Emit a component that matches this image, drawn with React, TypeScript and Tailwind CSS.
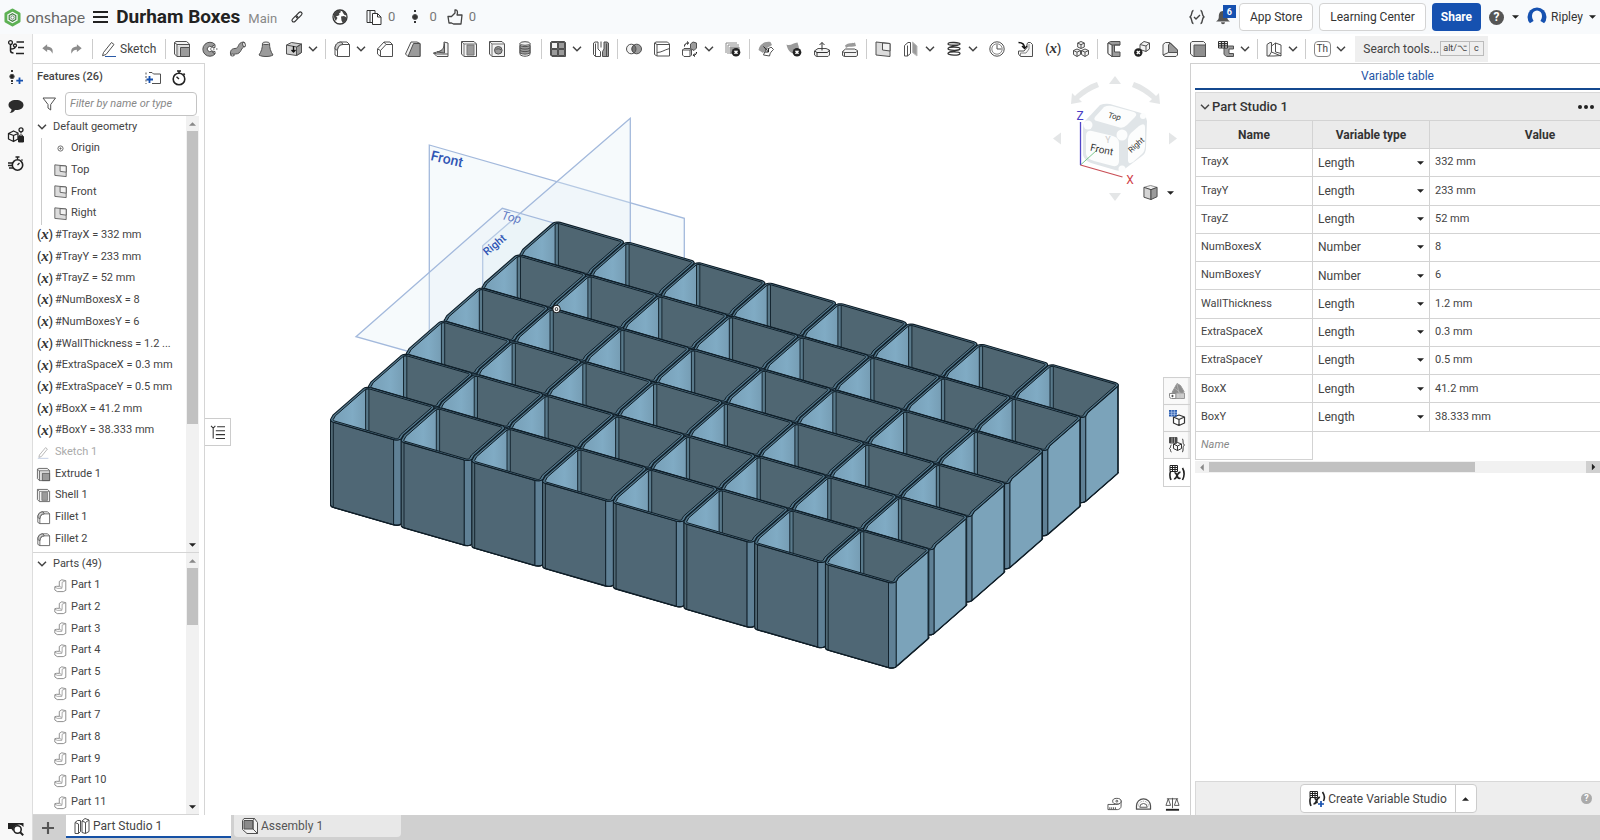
import React, { useState } from 'react';
import { clsx } from 'clsx';

const INK = '#505050';
const GREY = '#9b9b9b';
const PALE = '#f2f2f2';

type P = [number, number];

/* ---------- icons, all on a 16 x 16 grid ---------- */

const ICONS: Record<string, React.ReactNode> = {
  undo: <path d="M7 2.500 1.500 7 7 11.500V8.800c3.600 0 5 1.500 6 4.700C14.500 8.500 12 5.500 7 5.200z" fill="#8c8c8c" stroke="none" />,
  redo: <path d="M9 2.500 14.500 7 9 11.500V8.800c-3.600 0-5 1.500-6 4.700C1.500 8.500 4 5.500 9 5.200z" fill="#8c8c8c" stroke="none" />,
  pencil: (
    <>
      <path d="M2.500 11.500 10.500 1.500l2.500 2-8 10-3.500 1.200z" />
      <path d="M4 15.500h11" stroke="#2a5aa8" />
    </>
  ),
  pencilDim: (
    <>
      <path d="M3 11 10.500 2l2.300 1.800L5.300 13l-3 1z" stroke="#a9a9a9" />
      <path d="M1 15.200h13" stroke="#b9c6df" />
    </>
  ),
  extrude: (
    <>
      <path d="M.500 1.500 2 .500h10.500l3 2.500v12.500H3L.500 13z" fill={PALE} />
      <path d="M.500 1.500 3 3.500V15.500M3 3.500h12.500" />
      <path d="M6.500 6.500h9v9h-9z" fill={GREY} />
      <path d="M4.800 15V5H15" stroke="#ccc" />
    </>
  ),
  revolve: (
    <>
      <path d="M13 3.500A7 7 0 1 0 13 13l-3.500-3A2.600 2.600 0 1 1 9.500 6z" fill={GREY} />
      <path d="M9.500 6 13 3.500v3zM9.500 10l3.500 3v-2.500z" fill={PALE} />
      <path d="M8 8h1.500M11 8h1.500M14 8h1.500" />
    </>
  ),
  sweep: (
    <>
      <path d="M1 14.500c-1.500-3.500 0-7 4-7 4.500 0 2-6 8.500-6.500l1.500 4.500c-4.500.500-3 7.500-9.500 7.500-1.500 0-1.500 0-1.500 1.500z" fill={GREY} />
      <ellipse cx="14" cy="3.500" rx="1.300" ry="2.400" fill={PALE} transform="rotate(-15 14 3.500)" />
      <ellipse cx="2.500" cy="14" rx="1.800" ry="1" fill={PALE} />
    </>
  ),
  loft: (
    <>
      <path d="M4.500 2.500c0 4-1 8-3.500 11.500 3 2 11 2 14 0-2.500-3.500-3.500-7.500-3.500-11.500z" fill={GREY} />
      <ellipse cx="8" cy="2.300" rx="3.500" ry="1.300" fill={PALE} />
    </>
  ),
  thicken: (
    <>
      <path d="M.500 4 5.500 1.500l10 1.500v8.500L10.500 14.500l-10-1.500z" fill="#cfcfcf" />
      <path d="m10.500 6 5-3V11.500l-5 3z" fill={GREY} />
      <path d="m.500 4 10 2L15.500 3" />
      <path d="M7.500 5v6M5.500 9l2 2 2-2" stroke="#111" strokeWidth="1.400" />
    </>
  ),
  fillet: (
    <>
      <path d="M1 14V7.500c0-4 2.500-6.500 6.500-6.500H13l2.500 2.500v12h-12z" fill="#fff" />
      <path d="M3.500 15.500V9.500c0-3.500 2-6 5.500-6h6.500" />
      <path d="M1 8c0-4.500 2.500-7 6.500-7L9 3.500c-3.500 0-5.500 2.500-5.500 6z" fill="#d0d0d0" />
    </>
  ),
  chamfer: (
    <>
      <path d="M.500 8 7 1h6l2.500 2.500v12H3.500L.500 13z" fill="#fff" />
      <path d="M.500 8 3.500 9.500 9 3.500 7 1M9 3.500h6.500M3.500 9.500v6" />
    </>
  ),
  draft: (
    <>
      <path d="M.500 13 6 1h6l3 1.500v13H3z" fill={PALE} />
      <path d="M3 15.500 8.500 2.500H15v13z" fill={GREY} />
    </>
  ),
  rib: (
    <>
      <path d="M.500 12 11 9V1l4 1v13.500L4 15.500z" fill={PALE} />
      <path d="M4 11c4-.500 7-3 7.500-8.500V12z" fill={GREY} />
      <path d="M.500 12 4 13h11" />
    </>
  ),
  shell: (
    <>
      <path d="M.500.500h12.500l2.500 2.500v12.500H3L.500 13z" fill={PALE} />
      <path d="M.500.500 3 3v12.500M3 3h12.500" stroke="#777" />
      <path d="M6 4h7v10H6z" fill={GREY} stroke="#777" />
    </>
  ),
  hole: (
    <>
      <path d="M.500.500h12.500l2.500 2.500v12.500H3L.500 13z" fill={PALE} />
      <path d="m.500.500 2.500 2.500v12.500M3 3h12.500" stroke="#777" />
      <circle cx="9.300" cy="9.300" r="3.800" fill={GREY} />
      <path d="M6.500 9a3 2 0 0 1 5.500 0" />
    </>
  ),
  thread: (
    <>
      <path d="M3 2.500V13.500c2 2.300 8 2.300 10 0V2.500z" fill={PALE} />
      <path d="M3 4.500c2 1.500 8 1.500 10 0v7.500c-2 1.500-8 1.500-10 0z" fill={GREY} />
      <ellipse cx="8" cy="2.500" rx="5" ry="1.800" fill={PALE} />
      <path d="M3 7c2 1.500 8 1.500 10 0M3 9.500c2 1.500 8 1.500 10 0" />
    </>
  ),
  pattern: (
    <>
      <path d="M.500 1.500 1.500.500h13l1 1v14H2l-1.500-1.500z" fill="#777" />
      <path d="M1.500 1.500h6v6h-6z" fill={PALE} />
      <path d="M8.500 1.500h6v6h-6zM1.500 8.500h6v6h-6zM8.500 8.500h6v6h-6z" fill={GREY} />
    </>
  ),
  mirror: (
    <>
      <path d="M.500 2 2 1h3v7l2.500 2.500v5H2.500L.500 13.500z" fill="#fff" />
      <path d="M15.500 2v13.500h-6V10.500L11 8V1h3z" fill={GREY} />
      <path d="M2.500 2.500v13M13.500 2.500v13M8 .500v6" />
    </>
  ),
  boolean: (
    <>
      <circle cx="5.300" cy="8" r="4.800" fill={PALE} />
      <circle cx="10.700" cy="8" r="4.800" fill={GREY} />
      <path d="M8 4a5 5 0 0 1 0 8 5 5 0 0 1 0-8z" fill="#777" />
    </>
  ),
  split: (
    <>
      <path d="M.500 2 2 1h11.500l2 2v12H3L.500 13.500z" fill="#fff" />
      <path d="M.500 2 3 3.500h12.500M3 3.500V15M3 11.500c4.500 0 7-2.500 12.500-4" />
    </>
  ),
  transform: (
    <>
      <path d="M.500 9 2 7.500h6l1.500 1.500V14l-1.500 1.500H2L.500 14z" fill="#fff" />
      <path d="M.500 9h7.500v6.500M8 9l1.500-.500" />
      <path d="M8.500 3 11 1l3.500 1v5L12 9.500l-3.500-2z" fill={GREY} />
      <path d="M2.500 5.500c0-2 1-3.500 3.500-3.500M5 .500 6.700 2 5 3.500M14.500 11c0 2-1 3-3 3.500M12.800 12.500 11.300 14.200l1.700 1.300" stroke="#111" />
    </>
  ),
  deletePart: (
    <>
      <path d="M1 12V2h11M3 13V4h11M5 13V6h9v4" stroke="#8a8a8a" />
      <path d="M5 6h9v7H5z" fill={GREY} stroke="none" />
      <circle cx="11" cy="11.300" r="4.300" fill="#222" stroke="none" />
      <path d="m9.500 9.800 3 3m0-3-3 3" stroke="#fff" strokeWidth="1.500" />
    </>
  ),
  moveFace: (
    <>
      <path d="M.500 9c1-6 6-9 12-8L14 4 9 7l-4 5z" fill={GREY} stroke="none" />
      <path d="M5.500 14 8 8c2 0 4-1 5-2l2.500 2.500c-2 2-3.500 3-4 6.500z" fill="#fff" />
      <path d="m5.500 5.500 5 5.500M10.500 7.500v3.500H7" stroke="#222" />
    </>
  ),
  deleteFace: (
    <>
      <path d="M.500 3.500c4 2 7-2 11-2l1.500 5-5 6C4.500 12 1.500 9 .500 3.500z" fill={GREY} stroke="none" />
      <circle cx="11" cy="11.300" r="4.300" fill="#222" stroke="none" />
      <path d="m9.500 9.800 3 3m0-3-3 3" stroke="#fff" strokeWidth="1.500" />
    </>
  ),
  offsetFace: (
    <>
      <path d="m.500 10 3.500-2.500h8l3.500 1.500v5L14 15.500H2.500L.500 14z" fill={PALE} />
      <path d="M.500 10 3 11.500h10.500l2-2.500M3 11.500v4M8 9.500V1.500M5.500 4 8 1.500 10.500 4" stroke="#333" />
    </>
  ),
  replaceFace: (
    <>
      <path d="M3 4.500C7 1 9 3 13 1.500l1 3.500C10 6.500 6 4.500 4 7z" fill={GREY} stroke="none" />
      <path d="m.500 10.500 3-2.500h9l3 1.500v5l-1.500 1H2.500l-2-1z" fill={PALE} />
      <path d="M.500 10.500 2.500 11.500H14l1.500-1.500M2.500 11.500v4" />
    </>
  ),
  plane: (
    <>
      <path d="m1 1 14 1.500v13L1 14z" fill="#dcdcdc" />
      <path d="M7.500 2v7L15 10V2.500z" fill={PALE} />
    </>
  ),
  body: (
    <>
      <path d="M1.500 4.500 5 1.500h2.500v11L4.500 15h-3z" fill="#fff" />
      <path d="M4.500 4.500V15" />
      <path d="M9.500 1 14 5v10l-4.500-3.500z" fill={GREY} stroke="#bbb" />
    </>
  ),
  helix: (
    <path
      d="M2 3c0-2.500 12-1.500 12 0s-12 1.500-12 0M14 3c0 2-12 2-12 4.800 0-2.300 12-2.300 12 0s-12 1.700-12 0M14 7.800c0 2-12 2-12 4.800 0-2.300 12-2.300 12 0s-12 1.700-12 0"
      strokeWidth="1.300"
      stroke="#333"
    />
  ),
  circleL: (
    <>
      <circle cx="8" cy="8" r="7.200" />
      <circle cx="8" cy="8" r="5.200" fill="#fff" stroke="#888" />
      <path d="M8 3.500V8h4.500" />
    </>
  ),
  derive: (
    <>
      <path d="M11 1.500h2.500l2 2v12H3.500L1.500 13V10H7l3-3.500V3z" fill="#f7f7f7" />
      <path d="M3.500 15.500v-3.500H9l3-4V3" stroke="#888" />
      <path d="M1.500 1.500C5.500 1.500 7.500 3 7.500 7M5 5l2.500 2.500L10 5" stroke="#111" strokeWidth="1.400" />
    </>
  ),
  cubes: (
    <>
      <path d="m8 .500 3.300 1.500v4L8 7.500 4.700 6V2z" fill={PALE} />
      <path d="M4.700 2 8 3.700 11.300 2M8 3.700v3.800" />
      <path d="m4 8 3.500 1.500V13.500L4 15.500.500 13.500v-4zM12 8l3.500 1.500v4L12 15.500l-3.500-2v-4z" fill={PALE} />
      <path d="m.500 9.500 3.500 1.700 3.500-1.700M4 11.200v4.300M8.500 9.500l3.500 1.700 3.500-1.700M12 11.200v4.300" />
    </>
  ),
  sheetMetal: (
    <>
      <path d="M2 2 4.500.500H14v3.500H8.500v7H14v4.500H6L2 12.500z" fill={GREY} />
      <path d="M2 2 6 4h8M6 4v11.500" />
      <path d="M2 2 6 4v11.500L2 12.500z" fill={PALE} />
    </>
  ),
  sheetCorner: (
    <>
      <path d="m6 3.500 4-3 5.500 1.500v6L12 10.500 6 8.500z" fill={PALE} />
      <path d="m6 3.500 6 1.500L15.500 2M12 5v5.500" />
      <circle cx="4.300" cy="11.500" r="4.200" fill="#222" stroke="none" />
      <path d="m2.800 10 3 3m0-3-3 3" stroke="#fff" strokeWidth="1.400" />
    </>
  ),
  flange: (
    <>
      <path d="M1 3.500 3.500 1.500H8L15.500 9v5L14 15.500H3L1 14z" fill={PALE} />
      <path d="M6.500 4v7.500h9V9L8 2z" fill={GREY} />
      <path d="M1 14 6.500 11.500" />
    </>
  ),
  tab: (
    <>
      <path d="M.500 2 2 .500h11.500l2 2v13H3.500L.500 13z" fill={PALE} />
      <path d="M4 4h11.500v11.500H4z" fill="#8f8f8f" />
    </>
  ),
  sheetTable: (
    <>
      <path d="M6 5h9.500v3H11v4.500h4.500v3H8.500L6 13.500z" fill={GREY} />
      <path d="M.500.500h9v6.500h-9z" fill="#fff" stroke="#333" />
      <path d="M.500 2.700h9M.500 4.800h9M3.500.500v6.500M6.500.500v6.500" strokeWidth="1.300" stroke="#333" />
    </>
  ),
  bend: (
    <>
      <path d="M1 3.500 4 1.500h1.500V11L3 15H1z" fill={PALE} />
      <path d="M5.500 5 9.500 2v9l5.500 1.500V15L5.500 11z" fill="#fff" />
      <path d="M9.500 2 15 4v8.500M2.500 15H8l7-.500" />
    </>
  ),
  part: (
    <>
      <path d="M6.500 9V3L9.500 1l5 1V14l-3 1.500H4L1 13.500V9.500L3 9z" fill="#fff" stroke="#777" />
      <path d="M6.500 9 10 10.500V4l4.500-2M1 10 4 11.500h6" stroke="#999" />
    </>
  ),
  partStudio: (
    <>
      <path d="M1 4.500 3.500 2.500h3v11L4.500 15.500H1zM4.500 6v9.500M1 4.500 4.500 6" fill="#fff" />
      <path d="M8 3 11 .500l4 1.500V13.500l-3.500 2L8 14.500z" fill="#fff" />
      <path d="m8 3 3.500 1.500v11M11.500 4.500 15 2" />
    </>
  ),
  assembly: (
    <>
      <path d="M.500 2.500 2 .500h10.500l3 4v11H5l-4.500-4z" fill={PALE} />
      <path d="M2 2.500h9V11H2z" fill="#8a8a8a" />
      <path d="m12.500.500-1.500 2V11l4.500 4.500" />
    </>
  ),
  doc: (
    <>
      <path d="M1 13.500V1.500h8V4M1 13.500h5" stroke="#333" />
      <path d="M6.500 4.500h5l3.500 3.500v7.500H6.500z" fill="#fff" stroke="#333" />
      <path d="M11.500 4.500V8H15M4 1.500v12" stroke="#333" />
    </>
  ),
  version: (
    <>
      <path d="M8 1v3M8 12v3" strokeWidth="2" strokeDasharray="2 1" stroke="#333" />
      <circle cx="8" cy="8" r="2.500" fill="#333" />
    </>
  ),
  thumb: <path d="M1 7.500h3.500L8 4V1c2.500-.500 3 2 2 5h5l-1 9H6.500l-2-1H2z" strokeWidth="1.300" stroke="#444" />,
  globe: (
    <>
      <circle cx="8" cy="8" r="7" fill="#fff" strokeWidth="1.300" stroke="#333" />
      <path d="M2 5c1-2 3-3.500 6-3.500L9 3 7 4.500 7.500 6 5.500 7 4 7l1.500 2c-.500 1-1 1-1.500 3C2.500 10.500 1.500 8 2 5zM10 1.500c2 .500 4 2 5 5l-2.500-.500L11 4zM9 7.500l3-.500 2.500 1.500c0 2.500-1.500 4.500-3.500 6L9.500 11.500z" fill="#444" stroke="none" />
    </>
  ),
  link: (
    <g transform="rotate(-45 8 8)" strokeWidth="1.500" stroke="#333">
      <rect x="-.500" y="5.700" width="9.500" height="4.600" rx="2.300" />
      <rect x="7" y="5.700" width="9.500" height="4.600" rx="2.300" />
    </g>
  ),
  folderPlus: (
    <>
      <path d="M4 2.500h3L8.500 4h7v9.500H7" />
      <path d="M1 2.500v11.500" strokeDasharray="2 1.500" />
      <path d="M4.500 6v7M1.500 9.500h6.500" stroke="#1651b0" strokeWidth="1.800" />
    </>
  ),
  stopwatch: (
    <>
      <circle cx="8" cy="9" r="5.800" strokeWidth="1.600" stroke="#222" />
      <path d="M6 1h4M8 1v2M12.500 3.500l1.300 1.300M8 9 5.500 6.800" strokeWidth="1.500" stroke="#222" />
    </>
  ),
  history: (
    <>
      <circle cx="9.500" cy="9" r="5.200" strokeWidth="1.600" stroke="#222" />
      <path d="M7.500 1h4M9.500 1v2M13.500 3.500l1 1M9.500 9l2-2M0 7h5M0 9.500h4M1 12h4" strokeWidth="1.300" stroke="#222" />
    </>
  ),
  filter: <path d="M2 2h12.500L9.700 8.500V14L7 12V8.500z" />,
  tree: (
    <>
      <circle cx="2.500" cy="2.500" r="1.900" strokeWidth="1.300" stroke="#222" />
      <circle cx="7" cy="5.500" r="1.500" strokeWidth="1.300" stroke="#222" />
      <path d="M2.500 4.500v6c0 2 1 2.500 3 2.500M2.500 9c3 0 4.500-.500 4.500-2M8.500 2H16M10 7.500h6M8 13.500h8" stroke="#222" strokeWidth="1.500" />
    </>
  ),
  versionPlus: (
    <>
      <path d="M4 1v3M4 11v4" strokeWidth="1.800" strokeDasharray="2 1" stroke="#222" />
      <circle cx="4" cy="7.500" r="2.200" fill="#222" />
      <path d="M11.500 8.500v6.500M8.300 11.700H15" stroke="#1651b0" strokeWidth="1.800" />
    </>
  ),
  comment: <path d="M8 2C3.500 2 .500 4 .500 7c0 2 1.500 3.500 3 4.200C3.500 12.500 3 14 1.500 15c2.500 0 4.500-1.200 5.500-3h1c4.500 0 7.500-2 7.500-5S12.500 2 8 2z" fill="#2b2b2b" stroke="none" />,
  cubeLock: (
    <>
      <path d="m5.500 4 4.500 2v6l-4.500 2.500L.500 12V6.500zM.500 6.500l5 2 4.500-2M5.500 8.500v6" strokeWidth="1.300" stroke="#222" />
      <circle cx="13" cy="2.800" r="2" strokeWidth="1.300" stroke="#222" />
      <path d="M10.500 9.500h5V15h-5z" fill="#222" stroke="#222" />
      <path d="M13 5v1.500M11.700 9.500V8h2.600v1.500" stroke="#222" />
    </>
  ),
  searchTabs: (
    <>
      <path d="M0 3h15.500v4a5.500 5.500 0 0 0-10 4H5L3.500 9H0z" fill="#222" stroke="none" />
      <circle cx="9.500" cy="9.500" r="3.700" fill="#fff" strokeWidth="1.600" stroke="#222" />
      <path d="m12.200 12.200 3 3" strokeWidth="2" stroke="#222" />
    </>
  ),
  braces: <path d="M4.500 1.500C2 1.500 3.500 7 1 8c2.500 1 1 6.500 3.500 6.500M11.500 1.500C14 1.500 12.500 7 15 8c-2.500 1-1 6.500-3.500 6.500M5 8l2 2 4-4" strokeWidth="1.400" stroke="#444" />,
  bell: <path d="M8 2C4.500 2 3.800 5 3.800 8c0 2-.800 3-2.800 4.500h14C13 11 12.200 10 12.200 8c0-3-.700-6-4.200-6zM6 13.300a2 2 0 0 0 4 0z" fill="#555" stroke="none" />,
  swatches: (
    <>
      <path d="M3 9.500 8 .500l3.500 2L15 8.500 13 11H5z" fill="#8d8d8d" stroke="#999" />
      <path d="M.500 10.500h6.500V15.500H2.500a2 2 0 0 1-2-2z" fill="#fff" stroke="#888" />
      <path d="M7 10h8.500v5.500H7z" fill="#ccc" stroke="#999" />
      <path d="M11 10v5.500M5.500 5l6 5M8 1l2 9" stroke="#bbb" strokeWidth=".700" />
      <circle cx="3.500" cy="13" r=".700" fill="#222" />
    </>
  ),
  gridCube: (
    <>
      <path d="m10 5 5.500 2v6L10 15.500 4.500 13V7zM4.500 7l5.500 2.500L15.500 7M10 9.500v6" fill="#fff" strokeWidth="1.200" stroke="#333" />
      <path d="M0 0h8v6.500H0z" fill="#2a5caf" stroke="none" />
      <path d="M0 2.200h8M0 4.300h8M2.700 0v6.500M5.300 0v6.500" stroke="#bcd0f0" strokeWidth=".700" />
    </>
  ),
  gridBraces: (
    <>
      <path d="m8.500 5.500 4 1.500v4.500l-4 2-4-2V7zM4.500 7l4 2 4-2M8.500 9v4.500" strokeWidth="1" stroke="#333" />
      <path d="M2.500 8C1 8 2 11 .500 11.500 2 12 1 15 2.500 15M13 2c2 0 0 5 2.500 6-2.500 1-.500 7-2.500 7" stroke="#333" />
      <path d="M.500.500h7.500v5.500H.500z" fill="#444" />
      <path d="M3 .500V6M5.500.500V6" stroke="#ccc" strokeWidth=".700" />
    </>
  ),
  gridVar: (
    <>
      <path d="M2 5.500c-1.500 3-1.500 6 0 9.500M13.500 3c2 3.500 2 8 0 12" strokeWidth="1.600" stroke="#222" />
      <path d="M5 13.500c3 1.500 3-7.500 6.500-6M5.500 8c3-1 2 7 6 5" strokeWidth="1.800" stroke="#222" />
      <path d="M1 .500h7.500v6H1z" fill="#fff" stroke="#222" />
      <path d="M1 2.500h7.500M1 4.500h7.500M3.500.500v6M6 .500v6" stroke="#222" strokeWidth="1" />
    </>
  ),
  gridVarPlus: (
    <>
      <path d="M2 5.500c-1.500 3-1.500 6 0 9.500M13.500 1c2 3 2 7 1 9" strokeWidth="1.600" stroke="#222" />
      <path d="M4.500 12.500c3 1.500 3-7 6.500-6M5.500 8c2-1 2 3 3 4" strokeWidth="1.800" stroke="#222" />
      <path d="M1 .500h7.500v6H1z" fill="#fff" stroke="#222" />
      <path d="M1 2.500h7.500M1 4.500h7.500M3.500.500v6M6 .500v6" stroke="#222" strokeWidth="1" />
      <path d="M12 10v6M9 13h6" stroke="#1651b0" strokeWidth="1.700" />
    </>
  ),
  shadedCube: (
    <>
      <path d="m8 .500 7 2L8.500 5 1 2.500z" fill="#eee" stroke="#888" />
      <path d="M1 2.500 8.500 5v10.500L1 13z" fill="#d4d4d4" stroke="#444" />
      <path d="m15 2.500-6.500 2.500v10.500L15 12.500z" fill="#9a9a9a" stroke="#444" />
    </>
  ),
  listMenu: <path d="M0 1l2.500 2.500L5 1M7 2h9M5.500 6.500H16M5.500 11H16M5.500 15.500H16M2.500 4v11.500" stroke="#333" strokeWidth="1.200" />,
  tape: (
    <>
      <path d="M1 9h8c4 0 6-1 6-4v6c0 2-2 3.500-4 3.500H1z" fill="#fff" />
      <ellipse cx="10.500" cy="5.500" rx="4.500" ry="3" fill="#fff" />
      <circle cx="10.500" cy="5.500" r="1" />
      <path d="M3 14v-2M5 14v-2M7 14v-2M9 14v-2" />
    </>
  ),
  protractor: (
    <>
      <path d="M.500 14V10.500a7.500 7.500 0 0 1 15 0V14z" fill="#fff" strokeWidth="1.300" />
      <path d="M4 12a4 4 0 0 1 8 0z" />
      <path d="M2.500 11a5.500 5.500 0 0 1 11 0" stroke="#888" strokeDasharray="1 1" />
    </>
  ),
  scale: (
    <>
      <path d="M8 2v11M2 3h12M3.500 3 1 10h5zM12.500 3 10 10h5z" />
      <path d="M1 14.700h14" strokeWidth="2" stroke="#222" />
    </>
  ),
};

function Icon({ name, size = 'size-4' }: { name: string; size?: string }) {
  return (
    <svg viewBox="0 0 16 16" className={clsx('shrink-0 overflow-visible', size)} fill="none" stroke={INK} strokeWidth="1" strokeLinejoin="round" aria-hidden="true">
      {ICONS[name]}
    </svg>
  );
}

function Chevron() {
  return (
    <svg viewBox="0 0 10 6" className="h-1.5 w-2.5 shrink-0" fill="none" stroke="#444" strokeWidth="1.500" aria-hidden="true">
      <path d="m1 .800 4 4 4-4" />
    </svg>
  );
}

function Caret({ up = false }: { up?: boolean }) {
  return (
    <svg viewBox="0 0 8 4" className={clsx('h-1 w-[7px] shrink-0', up && 'rotate-180')} aria-hidden="true">
      <path d="M0 0h8L4 4z" fill="#222" />
    </svg>
  );
}

function VarMark() {
  return (
    <span className="text-xs font-medium whitespace-nowrap text-[#333]">
      (<i className="font-['Liberation_Serif',serif] text-[15px] font-bold">x</i>)
    </span>
  );
}

/* ---------- header ---------- */

function Header() {
  return (
    <header className="flex h-[34px] shrink-0 items-center bg-[#f8fafc] pl-1 text-[#333]">
      <svg viewBox="0 0 18 20" className="h-[19px] w-[17px]" fill="none" aria-hidden="true">
        <path d="m9 2 7 4v8l-7 4-7-4V6z" stroke="#5db154" strokeWidth="3" strokeLinejoin="round" />
        <path d="m9 6 3.500 2v4L9 14l-3.500-2V8z" stroke="#3d7c3b" strokeWidth="1.200" fill="#fff" />
        <circle cx="9" cy="10" r="1.800" stroke="#5b7d62" />
      </svg>
      <span className="ml-[5px] font-['Lato',sans-serif] text-[16px] text-[#666]">onshape</span>
      <button aria-label="Document menu" className="ml-2 flex w-[15px] flex-col gap-[3px]">
        <span className="h-[2px] bg-[#222]" />
        <span className="h-[2px] bg-[#222]" />
        <span className="h-[2px] bg-[#222]" />
      </button>
      <h1 className="ml-2 text-[19px] font-bold text-[#222]">Durham Boxes</h1>
      <span className="mt-1 ml-2 text-[13px] text-[#888]">Main</span>
      <button aria-label="Copy link" className="ml-3.5">
        <Icon name="link" size="size-3" />
      </button>
      <div className="ml-[29px] flex items-center text-[13px] text-[#777]">
        <Icon name="globe" />
        <Icon name="doc" size="size-4 ml-[18px]" />
        <span className="ml-1.5">0</span>
        <Icon name="version" size="size-4 ml-3" />
        <span className="ml-1.5">0</span>
        <Icon name="thumb" size="size-4 ml-2.5" />
        <span className="ml-1.5">0</span>
      </div>
      <div className="ml-auto flex items-center pr-1 text-xs">
        <button aria-label="Checks">
          <Icon name="braces" />
        </button>
        <button aria-label="Notifications" className="relative mr-2 ml-2.5">
          <Icon name="bell" />
          <span className="absolute -top-1 left-2 flex h-[13px] w-[13px] items-center justify-center bg-[#1651b0] text-[9px] font-bold text-white">6</span>
        </button>
        <button className="h-7 rounded border border-[#d3d3d3] bg-white px-2.5">App Store</button>
        <button className="ml-1.5 h-7 rounded border border-[#d3d3d3] bg-white px-2.5">Learning Center</button>
        <button className="ml-1.5 h-7 rounded bg-[#1651b0] px-[9px] font-bold text-white">Share</button>
        <button aria-label="Help" className="ml-2 flex items-center gap-2">
          <span className="flex size-[15px] items-center justify-center rounded-full bg-[#555] text-xs font-bold text-white">?</span>
          <Caret />
        </button>
        <button className="ml-2 flex items-center">
          <svg viewBox="0 0 20 20" className="size-5" aria-hidden="true">
            <circle cx="10" cy="10" r="9.500" fill="#1651b0" />
            <path d="M5 9a5 5.500 0 0 1 10 0c0 3-1.500 4-1.500 5l4 2.500L14.500 20H5.500l-3-3.500 4-2.500c0-1-1.500-2-1.500-5z" fill="#f8fafc" />
          </svg>
          <span className="mr-1.5 ml-1">Ripley</span>
          <Caret />
        </button>
      </div>
    </header>
  );
}

/* ---------- toolbar ---------- */

// '|' is a divider, 'v' the drop-down arrow that belongs to the tool before it
const TOOLS = [
  'extrude', 'revolve', 'sweep', 'loft', 'thicken', 'v', '|',
  'fillet', 'v', 'chamfer', 'draft', 'rib', 'shell', 'hole', 'thread', '|',
  'pattern', 'v', 'mirror', '|',
  'boolean', 'split', 'transform', 'v', 'deletePart', '|',
  'moveFace', 'deleteFace', 'offsetFace', 'replaceFace', '|',
  'plane', 'body', 'v', 'helix', 'v', 'circleL', 'derive', 'var', 'cubes', '|',
  'sheetMetal', 'sheetCorner', 'flange', 'tab', 'sheetTable', 'v', '|',
  'bend', 'v', '|',
  'th', 'v',
];

function Divider() {
  return <span className="mx-[2px] h-5 w-px shrink-0 bg-[#ccc]" />;
}

function Toolbar() {
  return (
    <div className="flex h-[29px] shrink-0 items-center bg-white text-xs text-[#444]">
      <button aria-label="Undo" className="flex w-[29px] justify-center">
        <Icon name="undo" size="size-[14px]" />
      </button>
      <button aria-label="Redo" className="flex w-7 justify-center">
        <Icon name="redo" size="size-[14px]" />
      </button>
      <Divider />
      <button className="mr-[7px] ml-1.5 flex items-center gap-[3px]">
        <Icon name="pencil" />
        Sketch
      </button>
      <Divider />
      {TOOLS.map((tool, i) => {
        if (tool === '|') return <Divider key={i} />;
        if (tool === 'v') {
          return (
            <button key={i} aria-label="More tools" className="flex h-7 w-[15px] shrink-0 items-center">
              <Chevron />
            </button>
          );
        }
        return (
          <button key={i} aria-label={tool} className="flex h-7 w-7 shrink-0 items-center justify-center">
            {tool === 'var' && <VarMark />}
            {tool === 'th' && <span className="rounded-sm border border-[#888] px-[2px] text-[10px] leading-[14px]">Th</span>}
            {tool !== 'var' && tool !== 'th' && <Icon name={tool} />}
          </button>
        );
      })}
      <label className="ml-1 flex h-[26px] w-[133px] shrink-0 items-center bg-[#efefef] pl-2">
        <input aria-label="Search tools" placeholder="Search tools..." className="w-[77px] bg-transparent outline-none placeholder:text-[#444]" />
        <kbd className="border border-[#bbb] px-[2px] font-[inherit] text-[9px] leading-[13px]">alt/⌥</kbd>
        <kbd className="border border-l-0 border-[#bbb] px-1 font-[inherit] text-[9px] leading-[13px]">c</kbd>
      </label>
    </div>
  );
}

/* ---------- left side ---------- */

function Rail() {
  return (
    <nav className="flex w-[33px] shrink-0 flex-col items-center border-r border-[#ddd] bg-[#f8f8f8] pt-1.5">
      <div className="flex flex-col gap-[13px]">
        {['tree', 'versionPlus', 'comment', 'cubeLock', 'history'].map(name => (
          <button key={name} aria-label={name}>
            <Icon name={name} />
          </button>
        ))}
      </div>
      <button aria-label="Search tabs" className="mt-auto mb-1">
        <Icon name="searchTabs" />
      </button>
    </nav>
  );
}

const FEATURES = [
  { icon: 'var', text: '#TrayX = 332 mm' },
  { icon: 'var', text: '#TrayY = 233 mm' },
  { icon: 'var', text: '#TrayZ = 52 mm' },
  { icon: 'var', text: '#NumBoxesX = 8' },
  { icon: 'var', text: '#NumBoxesY = 6' },
  { icon: 'var', text: '#WallThickness = 1.2 ...' },
  { icon: 'var', text: '#ExtraSpaceX = 0.3 mm' },
  { icon: 'var', text: '#ExtraSpaceY = 0.5 mm' },
  { icon: 'var', text: '#BoxX = 41.2 mm' },
  { icon: 'var', text: '#BoxY = 38.333 mm' },
  { icon: 'pencilDim', text: 'Sketch 1' },
  { icon: 'extrude', text: 'Extrude 1' },
  { icon: 'shell', text: 'Shell 1' },
  { icon: 'fillet', text: 'Fillet 1' },
  { icon: 'fillet', text: 'Fillet 2' },
];

function VScroll({ thumb }: { thumb: string }) {
  return (
    <div className="flex w-[13px] shrink-0 flex-col items-center bg-[#f1f1f1]">
      <span className="flex h-[15px] items-center opacity-50">
        <Caret up />
      </span>
      <span className={clsx('w-[11px] bg-[#c1c1c1]', thumb)} />
      <span className="mt-auto flex h-[15px] items-center">
        <Caret />
      </span>
    </div>
  );
}

function FeaturePanel() {
  return (
    <aside className="flex w-[172px] shrink-0 flex-col border-t border-r border-[#d5d5d5] bg-white pr-[5px] text-[11px] text-[#444]">
      <div className="flex h-[27px] items-center pl-1">
        <h2 className="font-medium">Features (26)</h2>
        <button aria-label="New folder" className="ml-auto">
          <Icon name="folderPlus" />
        </button>
        <button aria-label="Timing" className="mr-3 ml-2.5">
          <Icon name="stopwatch" />
        </button>
      </div>
      <div className="flex h-[25px] items-center pl-2">
        <Icon name="filter" />
        <input
          aria-label="Filter by name or type"
          placeholder="Filter by name or type"
          className="mr-[2px] ml-2 h-6 min-w-0 flex-1 rounded-sm border border-[#c4c4c4] px-1 text-[11px] italic outline-none placeholder:text-[#888]"
        />
      </div>
      <div className="flex h-[437px] shrink-0 border-b border-[#d5d5d5]">
        <ul className="grid h-[434px] min-w-0 flex-1 auto-rows-fr">
          <li className="flex items-center gap-1.5 pl-1">
            <Chevron />
            Default geometry
          </li>
          <li className="row-span-4 ml-2 grid auto-rows-fr border-l border-[#ccc] pl-3">
            <span className="flex items-center gap-1">
              <svg viewBox="0 0 14 14" className="size-[13px]" fill="none" stroke="#666" aria-hidden="true">
                <circle cx="7" cy="7" r="2.800" />
                <circle cx="7" cy="7" r=".700" fill="#666" />
              </svg>
              Origin
            </span>
            {['Top', 'Front', 'Right'].map(name => (
              <span key={name} className="flex items-center gap-1">
                <Icon name="plane" size="size-[13px]" />
                {name}
              </span>
            ))}
          </li>
          {FEATURES.map(({ icon, text }) => (
            <li key={text} className={clsx('flex items-center pl-1 whitespace-nowrap', icon === 'pencilDim' && 'text-[#aaa]')}>
              <span className="flex w-[18px] shrink-0 items-center">{icon === 'var' ? <VarMark /> : <Icon name={icon} size="size-[13px]" />}</span>
              {text}
            </li>
          ))}
        </ul>
        <VScroll thumb="h-[293px]" />
      </div>
      <div className="flex min-h-0 flex-1 border-b border-[#d5d5d5]">
        <ul className="grid h-[260px] min-w-0 flex-1 auto-rows-fr">
          <li className="flex items-center gap-1.5 pl-1">
            <Chevron />
            Parts (49)
          </li>
          {Array.from({ length: 11 }).map((_, i) => (
            <li key={i} className="flex items-center gap-1 pl-[21px]">
              <Icon name="part" size="size-[13px]" />
              Part {i + 1}
            </li>
          ))}
        </ul>
        <VScroll thumb="h-[57px]" />
      </div>
    </aside>
  );
}

/* ---------- model ---------- */

const COLS = 8;
const ROWS = 6;
const BOX_X = 41.2;
const BOX_Y = 38.333;
const HEIGHT = 87;
const SAG = 1.8;

// tray millimetres to drawing units
const project = (x: number, y: number, drop = 0): P => [555.3 + x * 1.7036 - y * 0.976, 221 + x * 0.4916 + y * 0.8516 + drop];

const line = (pts: P[]) => pts.map(([x, y]) => `${x.toFixed(1)},${y.toFixed(1)}`).join(' ');

function corner(cx: number, cy: number, r: number, from: number, drop = 0): P[] {
  return Array.from({ length: 6 }).map((_, i) => {
    const a = ((from + i * 18) * Math.PI) / 180;
    return project(cx + r * Math.cos(a), cy + r * Math.sin(a), drop);
  });
}

// clockwise from the back-left corner; sag lowers the two front corners of the rim
// 0-5 back left, 6-11 back right, 12 side, 13-18 front right, 19-24 front left, 25 side
function ring(x: number, y: number, inset: number, r: number, drop: number, sag: number): P[] {
  const x0 = x + inset + r;
  const x1 = x + BOX_X - inset - r;
  const y0 = y + inset + r;
  const y1 = y + BOX_Y - inset - r;
  return [
    ...corner(x0, y0, r, 180, drop),
    ...corner(x1, y0, r, 270, drop),
    project(x1 + r, y1 - 2, drop),
    ...corner(x1, y1, r, 0, drop + sag),
    ...corner(x0, y1, r, 90, drop + sag),
    project(x0 - r, y1 - 2, drop),
  ];
}

function Box({ col, row }: { col: number; row: number }) {
  const x = col * 41.5;
  const y = row * 38.833;
  const top = ring(x, y, 0, 2.9, 0, SAG);
  const base = ring(x, y, 0, 2.9, HEIGHT, 0);
  const hole = ring(x, y, 1.4, 1.2, 0, SAG);
  const id = `hole-${col}-${row}`;
  const wall = (a: number, b: number) => line([...top.slice(a, b + 1), ...base.slice(a, b + 1).reverse()]);
  const [left, back] = [hole[0], hole[5]];
  return (
    <g strokeLinejoin="round" stroke="#0f1e28">
      <polygon points={line([top[9], ...base.slice(9, 23), top[22]])} fill="#506874" />
      <polygon points={wall(18, 19)} fill="#4f6775" strokeWidth=".900" />
      <polygon points={wall(13, 18)} fill="#5f8095" strokeWidth=".900" />
      <polygon points={wall(11, 13)} fill="#7ba3ba" strokeWidth=".900" />
      <polyline points={line(base.slice(9, 23))} fill="none" strokeWidth="1.400" />
      <polygon points={line(top)} fill="#54788c" strokeWidth="1.100" />
      <clipPath id={id}>
        <polygon points={line(hole)} />
      </clipPath>
      <g clipPath={`url(#${id})`}>
        <polygon points={line(hole)} fill="#4f6672" stroke="none" />
        <polygon points={line([left, hole[25], ...hole.slice(20, 25), [left[0], left[1] + 80]])} fill="url(#inner)" stroke="none" />
        <polygon points={line([left, back, [back[0], back[1] + 80], [left[0], left[1] + 80]])} fill="#587889" strokeWidth=".900" />
      </g>
      <polygon points={line(hole)} fill="none" strokeWidth="1" />
    </g>
  );
}

function Model() {
  const cells = Array.from({ length: ROWS * COLS }).map((_, i) => ({ row: Math.floor(i / COLS), col: i % COLS }));
  return (
    <svg viewBox="205 63 985 752" className="block size-full font-['Roboto',sans-serif]" role="img" aria-label="Tray model">
      <defs>
        <linearGradient id="inner">
          <stop offset="0" stopColor="#779fb7" />
          <stop offset="0.600" stopColor="#80abc4" />
          <stop offset="1" stopColor="#769db4" />
        </linearGradient>
      </defs>
      <g fill="#e0eef6" fillOpacity="0.300" stroke="#a3b9dc" strokeWidth="1.300">
        <polygon points="429.300,145 684.300,218.300 684.300,400 429.300,400" />
        <polygon points="630.300,118.300 482.700,245.700 482.700,400 630.300,350" />
        <polygon points="502.300,208.300 356,336.700 460,366 620,242" />
      </g>
      <g fill="#2f55b4" fontSize="14" fontWeight="500">
        <text transform="translate(430 160) rotate(13)">Front</text>
        <text transform="translate(501 219) rotate(13)" fontSize="12" fontWeight="400" fontStyle="italic" fill="#5f7ac4">Top</text>
        <text transform="translate(487 256) rotate(-40)" fontSize="11">Right</text>
      </g>
      {cells.map(({ row, col }) => (
        <Box key={`${row}-${col}`} row={row} col={col} />
      ))}
      <circle cx="556.500" cy="309" r="2.600" fill="#222" stroke="#fff" strokeWidth="1.500" />
      <circle cx="556.500" cy="309" r="3.800" fill="none" stroke="#222" />
      <circle cx="556.500" cy="309" r="1" fill="#fff" />
      <ViewCube />
    </svg>
  );
}

function ViewCube() {
  return (
    <g>
      <g fill="#e4e6e7">
        <path d="m1115 76 6 8h-12zM1115 201l-6-8h12zM1053 138.500l8-6v12zM1177 138.500l-8-6v12z" />
        <path d="m1071 104 1-11 3 3c6-6 13-11 22-14l2 5c-8 3-14 7-20 12l3 3zM1160 104l-1-11-3 3c-6-6-13-11-22-14l-2 5c8 3 14 7 20 12l-3 3z" />
      </g>
      <path d="M1100 105q5-2 10-1l31 9q5 2 6 8l-1 27q0 5-4 8l-16 12q-5 4-11 2l-24-7q-7-3-8-8v-26q0-6 3-9z" fill="#e0e5e8" />
      <g fill="#fcfdfd">
        <path d="M1104 107q4-2 8-1l22 6q4 2 1 5l-8 8q-4 4-9 2l-21-6q-4-1-2-4z" />
        <path d="M1086 136q0-6 6-5l21 5q6 2 6 7v18q0 6-6 5l-19-5q-7-2-8-7z" />
        <path d="M1128 141q0-5 3-8l8-7q6-4 6 1v19q0 5-3 8l-9 8q-5 3-5-2z" />
        <circle cx="1122" cy="135" r="5.500" />
        <circle cx="1088" cy="125" r="4.500" />
        <circle cx="1122" cy="169" r="3.500" />
        <circle cx="1143" cy="116" r="3" />
      </g>
      <path d="M1080.500 165 1097 150" stroke="#7cc98f" />
      <path d="M1080.500 165V122" stroke="#5146c8" strokeWidth="1.300" />
      <path d="m1080.500 165 42 12" stroke="#c94f56" strokeWidth="1.300" />
      <g fill="#333" fontSize="10" textAnchor="middle">
        <text x="1108" y="143" fontSize="9" fill="#ccc">Y</text>
        <text transform="translate(1101 153) rotate(12)">Front</text>
        <text transform="translate(1138 147) rotate(-42)" fontSize="8">Right</text>
        <text transform="translate(1114 119) rotate(12)" fontSize="8" fontStyle="italic">Top</text>
        <text x="1080" y="120" fontSize="12" fill="#4a3fc4">Z</text>
        <text x="1130" y="184" fontSize="12" fill="#d0414a">X</text>
      </g>
    </g>
  );
}

function Viewport() {
  return (
    <main className="relative min-w-0 flex-1 overflow-hidden bg-white">
      <Model />
      <button aria-label="Toggle feature list" className="absolute top-[355px] left-0 flex h-7 w-[26px] items-center justify-center border border-l-0 border-[#ccc] bg-white">
        <Icon name="listMenu" size="size-[14px]" />
      </button>
      <button aria-label="View options" className="absolute top-[122px] right-[16px] flex items-center gap-[9px]">
        <Icon name="shadedCube" size="size-[15px]" />
        <Caret />
      </button>
      <div className="absolute top-[314px] right-0 flex flex-col border-t border-l border-[#d0d0d0]">
        {['swatches', 'gridCube', 'gridBraces', 'gridVar'].map(name => (
          <button
            key={name}
            aria-label={name}
            className={clsx('flex w-[26px] items-center justify-center border-b border-[#d0d0d0]', name === 'gridVar' ? 'h-7 bg-white' : 'h-[27px] bg-[#f9f9f9] shadow-[inset_-2px_0_1px_#e4e4e4]')}
          >
            <Icon name={name} />
          </button>
        ))}
      </div>
      <div className="absolute right-[10px] bottom-1 flex gap-[14px]">
        {['tape', 'protractor', 'scale'].map(name => (
          <button key={name} aria-label={name}>
            <Icon name={name} size="size-[15px]" />
          </button>
        ))}
      </div>
    </main>
  );
}

/* ---------- variable table ---------- */

const VARIABLES = [
  ['TrayX', 'Length', '332 mm'],
  ['TrayY', 'Length', '233 mm'],
  ['TrayZ', 'Length', '52 mm'],
  ['NumBoxesX', 'Number', '8'],
  ['NumBoxesY', 'Number', '6'],
  ['WallThickness', 'Length', '1.2 mm'],
  ['ExtraSpaceX', 'Length', '0.3 mm'],
  ['ExtraSpaceY', 'Length', '0.5 mm'],
  ['BoxX', 'Length', '41.2 mm'],
  ['BoxY', 'Length', '38.333 mm'],
];

function VariablePanel() {
  const [types, setTypes] = useState(VARIABLES.map(v => v[1]));

  return (
    <aside className="flex w-[410px] shrink-0 flex-col border-t border-l border-[#d0d0d0] bg-white pl-1 text-[11px] text-[#444]">
      <h2 className="flex h-[26px] shrink-0 items-center justify-center border-b-2 border-[#14488f] text-xs text-[#1f55a5]">Variable table</h2>
      <div className="mt-0.5 flex h-7 shrink-0 items-center border-t border-l border-[#d8d8d8] bg-[#ebebeb] px-1 text-[13px] font-medium text-[#333]">
        <Chevron />
        <span className="ml-0.5">Part Studio 1</span>
        <button aria-label="Table menu" className="mr-0.5 ml-auto flex gap-[2px]">
          <span className="size-[4px] rounded-full bg-[#222]" />
          <span className="size-[4px] rounded-full bg-[#222]" />
          <span className="size-[4px] rounded-full bg-[#222]" />
        </button>
      </div>
      <div className="shrink-0 overflow-hidden">
        <table className="h-[340px] w-[521px] table-fixed border-collapse">
          <colgroup>
            <col className="w-[117px]" />
            <col className="w-[117px]" />
            <col />
          </colgroup>
          <thead>
            <tr className="h-7 bg-[#ebebeb] text-xs text-[#333]">
              <th className="border border-[#d3d3d3] p-0 font-bold">Name</th>
              <th className="border border-[#d3d3d3] p-0 font-bold">Variable type</th>
              <th className="border border-[#d3d3d3] p-0 pr-[65px] font-bold">Value</th>
            </tr>
          </thead>
          <tbody>
            {VARIABLES.map(([name, , value], i) => (
              <tr key={name} className="h-7">
                <td className="border border-[#d3d3d3] p-0 pl-[5px]">{name}</td>
                <td className="border border-[#d3d3d3] p-0">
                  <div className="flex items-center px-[5px]">
                    <select
                      aria-label={`${name} type`}
                      value={types[i]}
                      onChange={e => setTypes(types.map((t, j) => (j === i ? e.target.value : t)))}
                      className="min-w-0 flex-1 appearance-none bg-transparent text-xs outline-none"
                    >
                      <option>Length</option>
                      <option>Number</option>
                    </select>
                    <Caret />
                  </div>
                </td>
                <td className="border border-[#d3d3d3] p-0 pl-[5px]">{value}</td>
              </tr>
            ))}
            <tr className="h-7">
              <td className="border border-[#d3d3d3] p-0 pl-[5px]">
                <input aria-label="New variable name" placeholder="Name" className="w-full italic outline-none placeholder:text-[#888]" />
              </td>
            </tr>
          </tbody>
        </table>
      </div>
      <div className="mt-px flex h-3 shrink-0 items-center bg-[#f1f1f1]">
        <span className="flex w-3.5 rotate-90 justify-center opacity-50">
          <Caret />
        </span>
        <span className="h-2.5 w-[266px] bg-[#c1c1c1]" />
        <span className="ml-auto flex h-3 w-3.5 items-center justify-center bg-[#d0d0d0]">
          <span className="flex -rotate-90">
            <Caret />
          </span>
        </span>
      </div>
      <div className="mt-auto flex h-[34px] shrink-0 items-center border-t border-l border-[#d8d8d8] bg-[#eee]">
        <div className="mx-auto flex h-[29px] rounded border border-[#ccc] bg-white">
          <button className="flex items-center gap-[3px] border-r border-[#ccc] px-2 text-xs">
            <Icon name="gridVarPlus" />
            Create Variable Studio
          </button>
          <button aria-label="More create options" className="flex w-5 items-center justify-center">
            <Caret up />
          </button>
        </div>
        <button aria-label="Table help" className="mr-2 flex size-[11px] items-center justify-center rounded-full bg-[#aaa] text-[9px] font-bold text-white">
          ?
        </button>
      </div>
    </aside>
  );
}

/* ---------- page ---------- */

function TabBar() {
  return (
    <footer className="flex h-[25px] shrink-0 bg-[#d0d0d0] text-xs text-[#444]">
      <button aria-label="Add tab" className="flex w-[33px] items-center justify-center pr-1">
        <svg viewBox="0 0 14 14" className="size-3" stroke="#555" strokeWidth="2.500" aria-hidden="true">
          <path d="M7 0v14M0 7h14" />
        </svg>
      </button>
      <button className="mb-0.5 flex w-[165px] items-center gap-[3px] border-b-2 border-[#1651a5] bg-white pl-2">
        <Icon name="partStudio" />
        Part Studio 1
      </button>
      <button className="mb-[3px] ml-[3px] flex w-[167px] items-center gap-[3px] rounded-b bg-[#e8e8e8] pl-2 text-[#555]">
        <Icon name="assembly" />
        Assembly 1
      </button>
    </footer>
  );
}

export default function App() {
  return (
    <div className="flex h-screen flex-col overflow-hidden bg-white font-['Roboto','Liberation_Sans',sans-serif]">
      <Header />
      <div className="flex min-h-0 flex-1">
        <Rail />
        <div className="flex min-w-0 flex-1 flex-col">
          <Toolbar />
          <div className="flex min-h-0 flex-1">
            <FeaturePanel />
            <Viewport />
            <VariablePanel />
          </div>
          <TabBar />
        </div>
      </div>
    </div>
  );
}
